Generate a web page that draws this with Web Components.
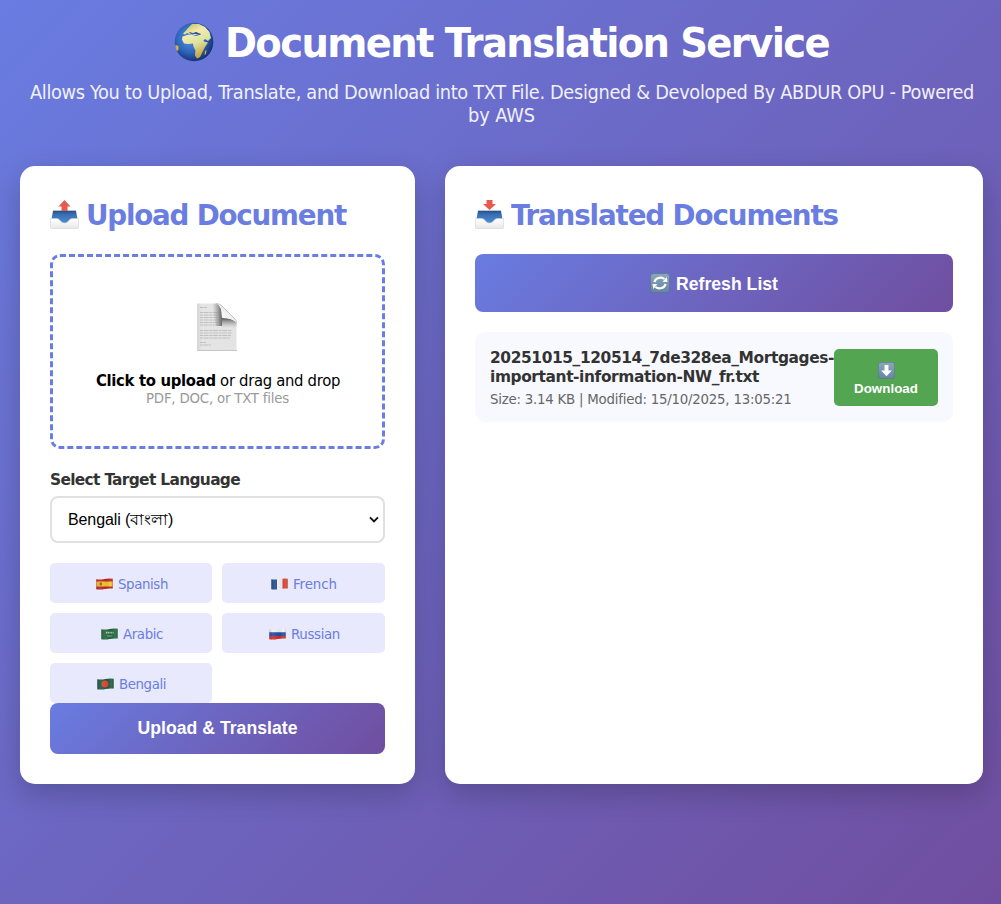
<!DOCTYPE html>
<html lang="en">
<head>
<meta charset="utf-8">
<title>Document Translation Service</title>
<style>
html,body{margin:0;height:904px;overflow:hidden}
body{background:linear-gradient(135deg,#697ce1 0%,#704e9f 100%);font-family:"DejaVu Sans Condensed","DejaVu Sans",Tahoma,sans-serif}
</style>
</head>
<body>
<translation-app></translation-app>
<script>
const icons = {
globe:`<svg viewBox="0 0 40 40"><defs><radialGradient id="g" cx=".42" cy=".4" r=".62"><stop offset="0" stop-color="#5b96df"/><stop offset=".6" stop-color="#2e65bd"/><stop offset="1" stop-color="#14306f"/></radialGradient><linearGradient id="l" x1="0" y1="0" x2=".4" y2="1"><stop offset="0" stop-color="#b8b653"/><stop offset=".35" stop-color="#f4ebae"/><stop offset=".65" stop-color="#dde3a0"/><stop offset="1" stop-color="#c9a545"/></linearGradient></defs><circle cx="20" cy="20" r="19.3" fill="url(#g)"/><path fill="url(#l)" d="M10 14q4-2 8-1.500l3 1.500 6-.5 3 6 4 1-3 4.500-2 4-3 6-3 1.500-2-3 .5-5-2-4-.5-3-5 .5-4-.5-2-4 .5-3zM14 6l4-4 7 0 6 3 4.500 5 1.500 6-3 3-3-2-2 2-3-3-2-3-4 0-2-2-2 1-3-1-2 1.500-2-1 2-2z"/><path fill="#d8ae42" d="M31 29l1.500-1-.5 4-1.500 1zM1.500 23l3 1 0 4-1.500 1-1.500-3z"/><path d="M15 10l4 1 3-1 5 2-1 1-5-1-5-.5z" fill="#244f9c"/></svg>`,
out:tray('M14.500 0l6 6.500h-3v4.500h-6v-4.500h-3z'),
in:tray('M11.500 0h6v4h3.500l-6.500 6-6.500-6h3.500z'),
doc:`<svg viewBox="0 0 40 48"><defs><linearGradient id="p" x2="1"><stop stop-color="#d4d4d4"/><stop offset=".12" stop-color="#e5e5e5"/><stop offset="1" stop-color="#e3e3e3"/></linearGradient><linearGradient id="s" x1="1" x2="0" y2=".1"><stop stop-color="#555"/><stop offset="1" stop-color="#999" stop-opacity="0"/></linearGradient><linearGradient id="t" x2="0" y2="1"><stop stop-color="#555"/><stop offset="1" stop-color="#aaa" stop-opacity="0"/></linearGradient><linearGradient id="c" x1="0" y1="1" x2=".7" y2=".2"><stop stop-color="#c5c5c5"/><stop offset=".5" stop-color="#fafafa"/><stop offset="1" stop-color="#dcdcdc"/></linearGradient></defs><path fill="url(#p)" d="M0 .5h18q4 .5 6 2.500l15.500 15v29.500h-39.500z"/><path stroke="#b5b5b5" stroke-width=".8" stroke-dasharray="3 .6 5 .7" d="M3 4.500h7M3 9.500h19M3 12h20M3 14.500h20M3 17h20M3 19.500h20M3 22h20M3 27.500h32M3 30h32M3 32.500h31M3 35h30M3 39.500h6M3 42h11"/><path fill="url(#s)" d="M15 .5h4q6 1 6 14.500v8h-6z"/><path fill="url(#t)" d="M25 15q11 0 14.500 5v5h-14.500z"/><path fill="url(#c)" d="M19 .5q6 1.500 6 14.500 11 0 14.500 5 0-3-2-4.500l-13-13q-2.500-2-5.500-2z"/><path fill="none" stroke="#999" stroke-width=".5" d="M19 .5q3 0 5.500 2l13 13q2 1.500 2 4.500"/><path stroke="#c5c5c5" d="M0 47.500h40"/></svg>`,
refresh:tile(`<path d="M4.500 9a6 5 0 0 1 10-3M15.500 11a6 5 0 0 1-10 3" fill="none" stroke="#fff" stroke-width="2.200"/><path fill="#fff" d="M12.500 8.800l5 .2-.7-5zM7.500 11.200l-5-.2.700 5z"/>`),
down:tile(`<path fill="#fff" d="M7.700 3.500h4.600v6.500h4l-6.300 6.800-6.300-6.800h4z"/>`),
es:flag('<path fill="#bc2520" d="M0 0h17v12H0z"/><path fill="#f4c52f" d="M0 3.500h17v5H0z"/><path fill="#a75428" d="M3.500 4.500h2.500v3h-2.500z"/>'),
fr:flag('<path fill="#f4f4f4" d="M0 0h17v12H0z"/><path fill="#234f92" d="M0 0h6v12H0z"/><path fill="#d94335" d="M11.500 0H17v12h-5.500z"/>'),
sa:flag('<path fill="#23683e" d="M0 0h17v12H0z"/><path stroke="#b8d0bd" stroke-width="1.700" stroke-dasharray="1.200 .5" d="M5 4.700h7.500"/><path stroke="#b8d0bd" stroke-width=".7" d="M6 8h5.500"/>'),
ru:flag('<path fill="#f2f2f2" d="M0 0h17v12H0z"/><path fill="#244da8" d="M0 4.300h17v4H0z"/><path fill="#ce3029" d="M0 8h17v4H0z"/>'),
bd:flag('<path fill="#205b45" d="M0 0h17v12H0z"/><circle cx="8" cy="6" r="3.500" fill="#df4932"/>')
};
function tray(arrow){return `<svg viewBox="0 0 29 29"><defs><linearGradient id="b" y2="1" x2="0"><stop stop-color="#28558e"/><stop offset=".3" stop-color="#3970b5"/><stop offset="1" stop-color="#4e91d6"/></linearGradient><linearGradient id="w" y2="1" x2="0"><stop stop-color="#fff"/><stop offset="1" stop-color="#e8e8e8"/></linearGradient></defs><path d="M3 11h23l1.500 8-8 5h-11l-7-5z" fill="url(#b)"/><path d="M3 11h23" stroke="#254e80" stroke-width=".7"/><path fill="url(#w)" stroke="#cfcfcf" stroke-width=".5" d="M.5 18.500h6.500q2 0 3.500 2.500 1.500 2 4 2t4-2q1.500-2.500 3.500-2.500h6.500v9q0 1-1 1h-26q-1 0-1-1z"/><path d="${arrow}" fill="#e65b4d"/></svg>`}
function tile(inner){return `<svg viewBox="0 0 20 20"><defs><linearGradient id="k" y2="1" x2="0"><stop stop-color="#8ba7b9"/><stop offset="1" stop-color="#6585a4"/></linearGradient></defs><rect x=".4" y=".4" width="19.200" height="19.200" rx="3" fill="url(#k)" stroke="#55758e" stroke-width=".7"/>${inner}</svg>`}
function flag(inner){return `<svg viewBox="0 0 17 12"><defs><clipPath id="f"><path d="M.3 1.300Q4 2 8.500 1t8.200-.3v9.900q-4-.6-8.200.4t-8.200.2z"/></clipPath><linearGradient id="h" x2="1"><stop stop-color="#000" stop-opacity=".2"/><stop offset=".25" stop-color="#fff" stop-opacity=".08"/><stop offset=".6" stop-color="#000" stop-opacity=".06"/><stop offset=".85" stop-color="#fff" stop-opacity=".1"/><stop offset="1" stop-color="#000" stop-opacity=".15"/></linearGradient></defs><g clip-path="url(#f)">${inner}<path fill="url(#h)" d="M0 0h17v12H0z"/></g></svg>`}
function component(name, css, html){
  customElements.define(name, class extends HTMLElement{
    constructor(){super();this.attachShadow({mode:'open'}).innerHTML=`<style>${css}</style>${html}`}
  });
}
component('translation-app',
`:host{display:block;width:963px;padding:19px 0 0 20px}
main{display:grid;grid-template-columns:395px 538px;gap:30px;margin-top:39px}`,
`<app-header></app-header><main><panel-card><upload-form></upload-form></panel-card><panel-card><document-list></document-list></panel-card></main>`);
component('app-header',
`:host{display:block;color:#fff;text-align:center}
h1{margin:0 0 14px;height:48px;font-size:40px;line-height:48px;display:flex;justify-content:center;align-items:center;gap:11px}
ui-icon{width:40px;height:40px;margin-top:-2px}
p{margin:0;font-size:19.2px;line-height:23px;opacity:.9;display:flex;flex-direction:column;align-items:center}`,
`<h1><ui-icon name="globe"></ui-icon><fit-text k="1.07" w="604">Document Translation Service</fit-text></h1><p><fit-text w="944">Allows You to Upload, Translate, and Download into TXT File. Designed &amp; Devoloped By ABDUR OPU - Powered</fit-text><fit-text w="67">by AWS</fit-text></p>`);
component('panel-card',
`:host{display:block;box-sizing:border-box;height:618px;padding:30px;background:#fff;border-radius:15px;box-shadow:0 10px 30px rgba(0,0,0,.2)}`,`<slot></slot>`);
component('card-title',
`:host{display:flex;align-items:center;height:38px;margin-bottom:20px;gap:7px;color:#6a7de0;font-size:28.8px;font-weight:bold;line-height:38px}
`,`<slot></slot>`);
component('upload-form',
`:host{display:block}
ui-icon.t{width:29px;height:29px;margin-top:-2px}
label{display:block;margin:21px 0 7px;font-size:16px;line-height:19px;font-weight:bold;color:#333}
.select{box-sizing:border-box;height:47px;border:2px solid #e0e0e0;border-radius:8px;padding:0 4px 0 16px;display:flex;align-items:center;justify-content:space-between;font:16px/20px "Liberation Sans",Arial,sans-serif;color:#000}
.select svg{width:10px;height:7px;display:block}
.grid{display:grid;grid-template-columns:162px 163px;gap:10px;margin-top:20px}
.up{margin-top:-2px}`,
`<card-title><ui-icon class="t" name="out"></ui-icon><fit-text k="1.07" w="260">Upload Document</fit-text></card-title><drop-zone></drop-zone><label><fit-text k="1.07" w="190">Select Target Language</fit-text></label><div class="select"><fit-text k="1" w="105">Bengali (বাংলা)</fit-text><svg viewBox="0 0 10 7"><path d="M1 1.300l4 4 4-4" fill="none" stroke="#111" stroke-width="1.900"/></svg></div><div class="grid"><lang-chip flag="es" w="50">Spanish</lang-chip><lang-chip flag="fr" w="44">French</lang-chip><lang-chip flag="sa" w="40">Arabic</lang-chip><lang-chip flag="ru" w="49">Russian</lang-chip><lang-chip flag="bd" w="47">Bengali</lang-chip></div><action-button style="--h:51px"><fit-text class="up" k="1" w="160">Upload &amp; Translate</fit-text></action-button>`);
component('drop-zone',
`:host{display:flex;flex-direction:column;align-items:center;box-sizing:border-box;height:195px;border:3px dashed #6a7de0;border-radius:10px;padding-top:46px;font-size:16px;line-height:19px;color:#000}
ui-icon{width:40px;height:48px;margin:0 1px 20px 0}
div{display:flex}
.hint{font-size:14.4px;line-height:17px;color:#999}`,
`<ui-icon name="doc"></ui-icon><div><fit-text w="244"><b>Click to upload</b> or drag and drop</fit-text></div><div class="hint"><fit-text w="143">PDF, DOC, or TXT files</fit-text></div>`);
customElements.define('lang-chip',class extends HTMLElement{constructor(){super();
this.attachShadow({mode:'open'}).innerHTML=`<style>:host{display:flex;box-sizing:border-box;padding-top:2px;align-items:center;justify-content:center;gap:5px;height:40px;border-radius:5px;background:#e8e9fc;color:#6a7de0;font-size:14.4px;line-height:18px}ui-icon{width:17px;height:12px;margin-left:1px}</style><ui-icon name="${this.getAttribute('flag')}"></ui-icon><fit-text w="${this.getAttribute('w')}"><slot></slot></fit-text>`}});
component('action-button',
`:host{display:flex;align-items:center;justify-content:center;gap:5px;height:var(--h);border-radius:8px;background:linear-gradient(135deg,#697ce1,#704e9f);color:#fff;font:bold 17.6px/20px "Liberation Sans",Arial,sans-serif}`,`<slot></slot>`);
component('document-list',
`:host{display:block}
ui-icon.t{width:29px;height:29px;margin-top:-2px}
ui-icon.r{width:20px;height:20px}
.rl{margin:2px 0 0 1px}
document-row{margin-top:20px}`,
`<card-title><ui-icon class="t" name="in"></ui-icon><fit-text k="1.07" w="327">Translated Documents</fit-text></card-title><action-button style="--h:58px"><ui-icon class="r" name="refresh"></ui-icon><fit-text class="rl" k="1" w="102">Refresh List</fit-text></action-button><document-row></document-row>`);
component('document-row',
`:host{display:flex;box-sizing:border-box;height:90px;padding:16px 15px 0;background:#f8f9ff;border-radius:10px}
.info{width:344px;flex:none;color:#333;font-size:16px;line-height:19px;font-weight:bold}
.info div{display:flex}
.meta{margin-top:5px;font-size:14.4px;line-height:17px;font-weight:normal;color:#666}
.dl{box-sizing:border-box;width:104px;height:57px;margin-top:1px;padding-top:13px;display:flex;flex-direction:column;align-items:center;border-radius:5px;background:#53a551;color:#fff;font:bold 13.333px/16px "Liberation Sans",Arial,sans-serif}
ui-icon{width:17px;height:17px;margin-bottom:2px}`,
`<div class="info"><div><fit-text k="1.07" w="344">20251015_120514_7de328ea_Mortgages-</fit-text></div><div><fit-text k="1.07" w="269">important-information-NW_fr.txt</fit-text></div><div class="meta"><fit-text w="301.500">Size: 3.14 KB | Modified: 15/10/2025, 13:05:21</fit-text></div></div><div class="dl"><ui-icon name="down"></ui-icon><fit-text k="1" w="64">Download</fit-text></div>`);
customElements.define('ui-icon',class extends HTMLElement{constructor(){super();
this.attachShadow({mode:'open'}).innerHTML=`<style>:host{display:block;flex:none}svg{display:block;width:100%;height:100%}</style>${icons[this.getAttribute('name')]}`}});
/* Sets a line of text to the width in its w attribute; k is the horizontal stretch of the glyphs. */
customElements.define('fit-text',class extends HTMLElement{constructor(){super();
this.attachShadow({mode:'open'}).innerHTML=`<style>:host{display:block;text-align:left;white-space:nowrap}span{display:inline-block;vertical-align:top;transform-origin:0 0}</style><span><slot></slot></span>`}
connectedCallback(){
const w=+this.getAttribute('w'),k=+(this.getAttribute('k')||1.03);
const text=this.textContent.trim()||this.getRootNode().host.textContent.trim();
const span=this.shadowRoot.querySelector('span');
const now=span.getBoundingClientRect().width;
this.style.width=w+'px';
span.style.letterSpacing=(w/k-now)/[...text].length+'px';
if(k!==1)span.style.transform=`scaleX(${k})`;
}});
</script>
</body>
</html>
